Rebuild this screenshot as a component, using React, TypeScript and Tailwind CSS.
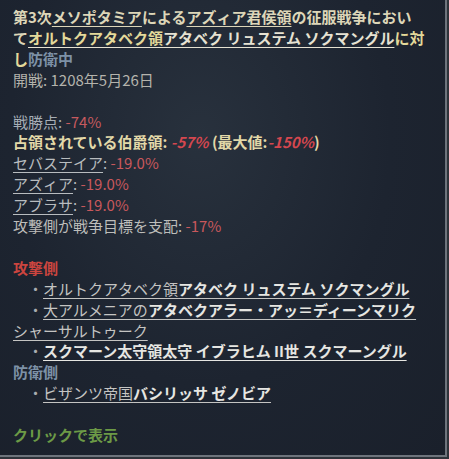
import React from "react";

const u = "underline decoration-1 underline-offset-[3px]";

const Bullet: React.FC<{ children: React.ReactNode }> = ({ children }) => (
  <div className="pl-[15px]">
    <span className="text-[#a9adb0]">・</span>
    {children}
  </div>
);

const App: React.FC = () => {
  return (
    <div className="h-[459px] w-[449px] bg-[#2e333a]">
      <div
        className="h-[457px] w-[447px] border-r-2 border-b-2 border-[#6e747c] bg-[#1c2330] bg-[radial-gradient(ellipse_at_45%_30%,#28313d_0%,#1d2430_55%,#1a202b_100%)] pl-[13px] pt-[7px] text-[15px] leading-[20.9px] text-[#ddd6b8]"
        style={{ fontFamily: '"Noto Sans CJK JP", "Noto Sans", sans-serif' }}
      >
        <div className="font-semibold">
          第3次<span className={u}>メソポタミア</span>による
          <span className={u}>アズィア君侯領</span>の征服戦争におい
          <br />
          て
          <span className={`${u} text-[#e6e2d2]`}>
            <span className="text-[#e3d99a]">オルトクアタベク領</span>アタベク リュステム ソクマングル
          </span>
          <span className="text-[#e3d99a]">に対</span>
          <br />
          <span className="text-[#e3d99a]">し</span>
          <span className="text-[#7d91a6]">防衛中</span>
        </div>
        <div className="text-[#b4b3ac]">開戦: 1208年5月26日</div>
        <div className="h-[20.9px]" />
        <div className="text-[#a6aeb6]">
          戦勝点: <span className="text-[#c65a5f]">-74%</span>
        </div>
        <div className="font-semibold text-[#e2d8a8]">
          占領されている伯爵領: <span className="italic text-[#d4474f]">-57%</span> (最大値:
          <span className="italic text-[#d4474f]">-150%</span>)
        </div>
        <div className="text-[#b8bcbf]">
          <span className={u}>セバステイア</span>: <span className="text-[#c8585c]">-19.0%</span>
        </div>
        <div className="text-[#b8bcbf]">
          <span className={u}>アズィア</span>: <span className="text-[#c8585c]">-19.0%</span>
        </div>
        <div className="text-[#b8bcbf]">
          <span className={u}>アブラサ</span>: <span className="text-[#c8585c]">-19.0%</span>
        </div>
        <div className="text-[#bdbdba]">
          攻撃側が戦争目標を支配: <span className="text-[#c8585c]">-17%</span>
        </div>
        <div className="h-[20.9px]" />
        <div className="font-semibold text-[#cc453f]">攻撃側</div>
        <Bullet>
          <span className={`${u} text-[#c4c4c2]`}>
            オルトクアタベク領<span className="font-semibold text-[#e6e6e2]">アタベク リュステム ソクマングル</span>
          </span>
        </Bullet>
        <Bullet>
          <span className={`${u} text-[#c4c4c2]`}>
            大アルメニアの<span className="font-semibold text-[#e6e6e2]">アタベクアラー・アッ＝ディーンマリク</span>
          </span>
        </Bullet>
        <div>
          <span className={`${u} text-[#c4c4c2]`}>シャーサルトゥーク</span>
        </div>
        <Bullet>
          <span className={`${u} font-semibold text-[#e6e6e2]`}>スクマーン太守領太守 イブラヒム II世 スクマーングル</span>
        </Bullet>
        <div className="font-semibold text-[#7d91a6]">防衛側</div>
        <Bullet>
          <span className={`${u} text-[#c4c4c2]`}>
            ビザンツ帝国<span className="font-semibold text-[#e6e6e2]">バシリッサ ゼノビア</span>
          </span>
        </Bullet>
        <div className="h-[20.9px]" />
        <div className="font-semibold text-[#6c9a46]">クリックで表示</div>
      </div>
    </div>
  );
};

export default App;
